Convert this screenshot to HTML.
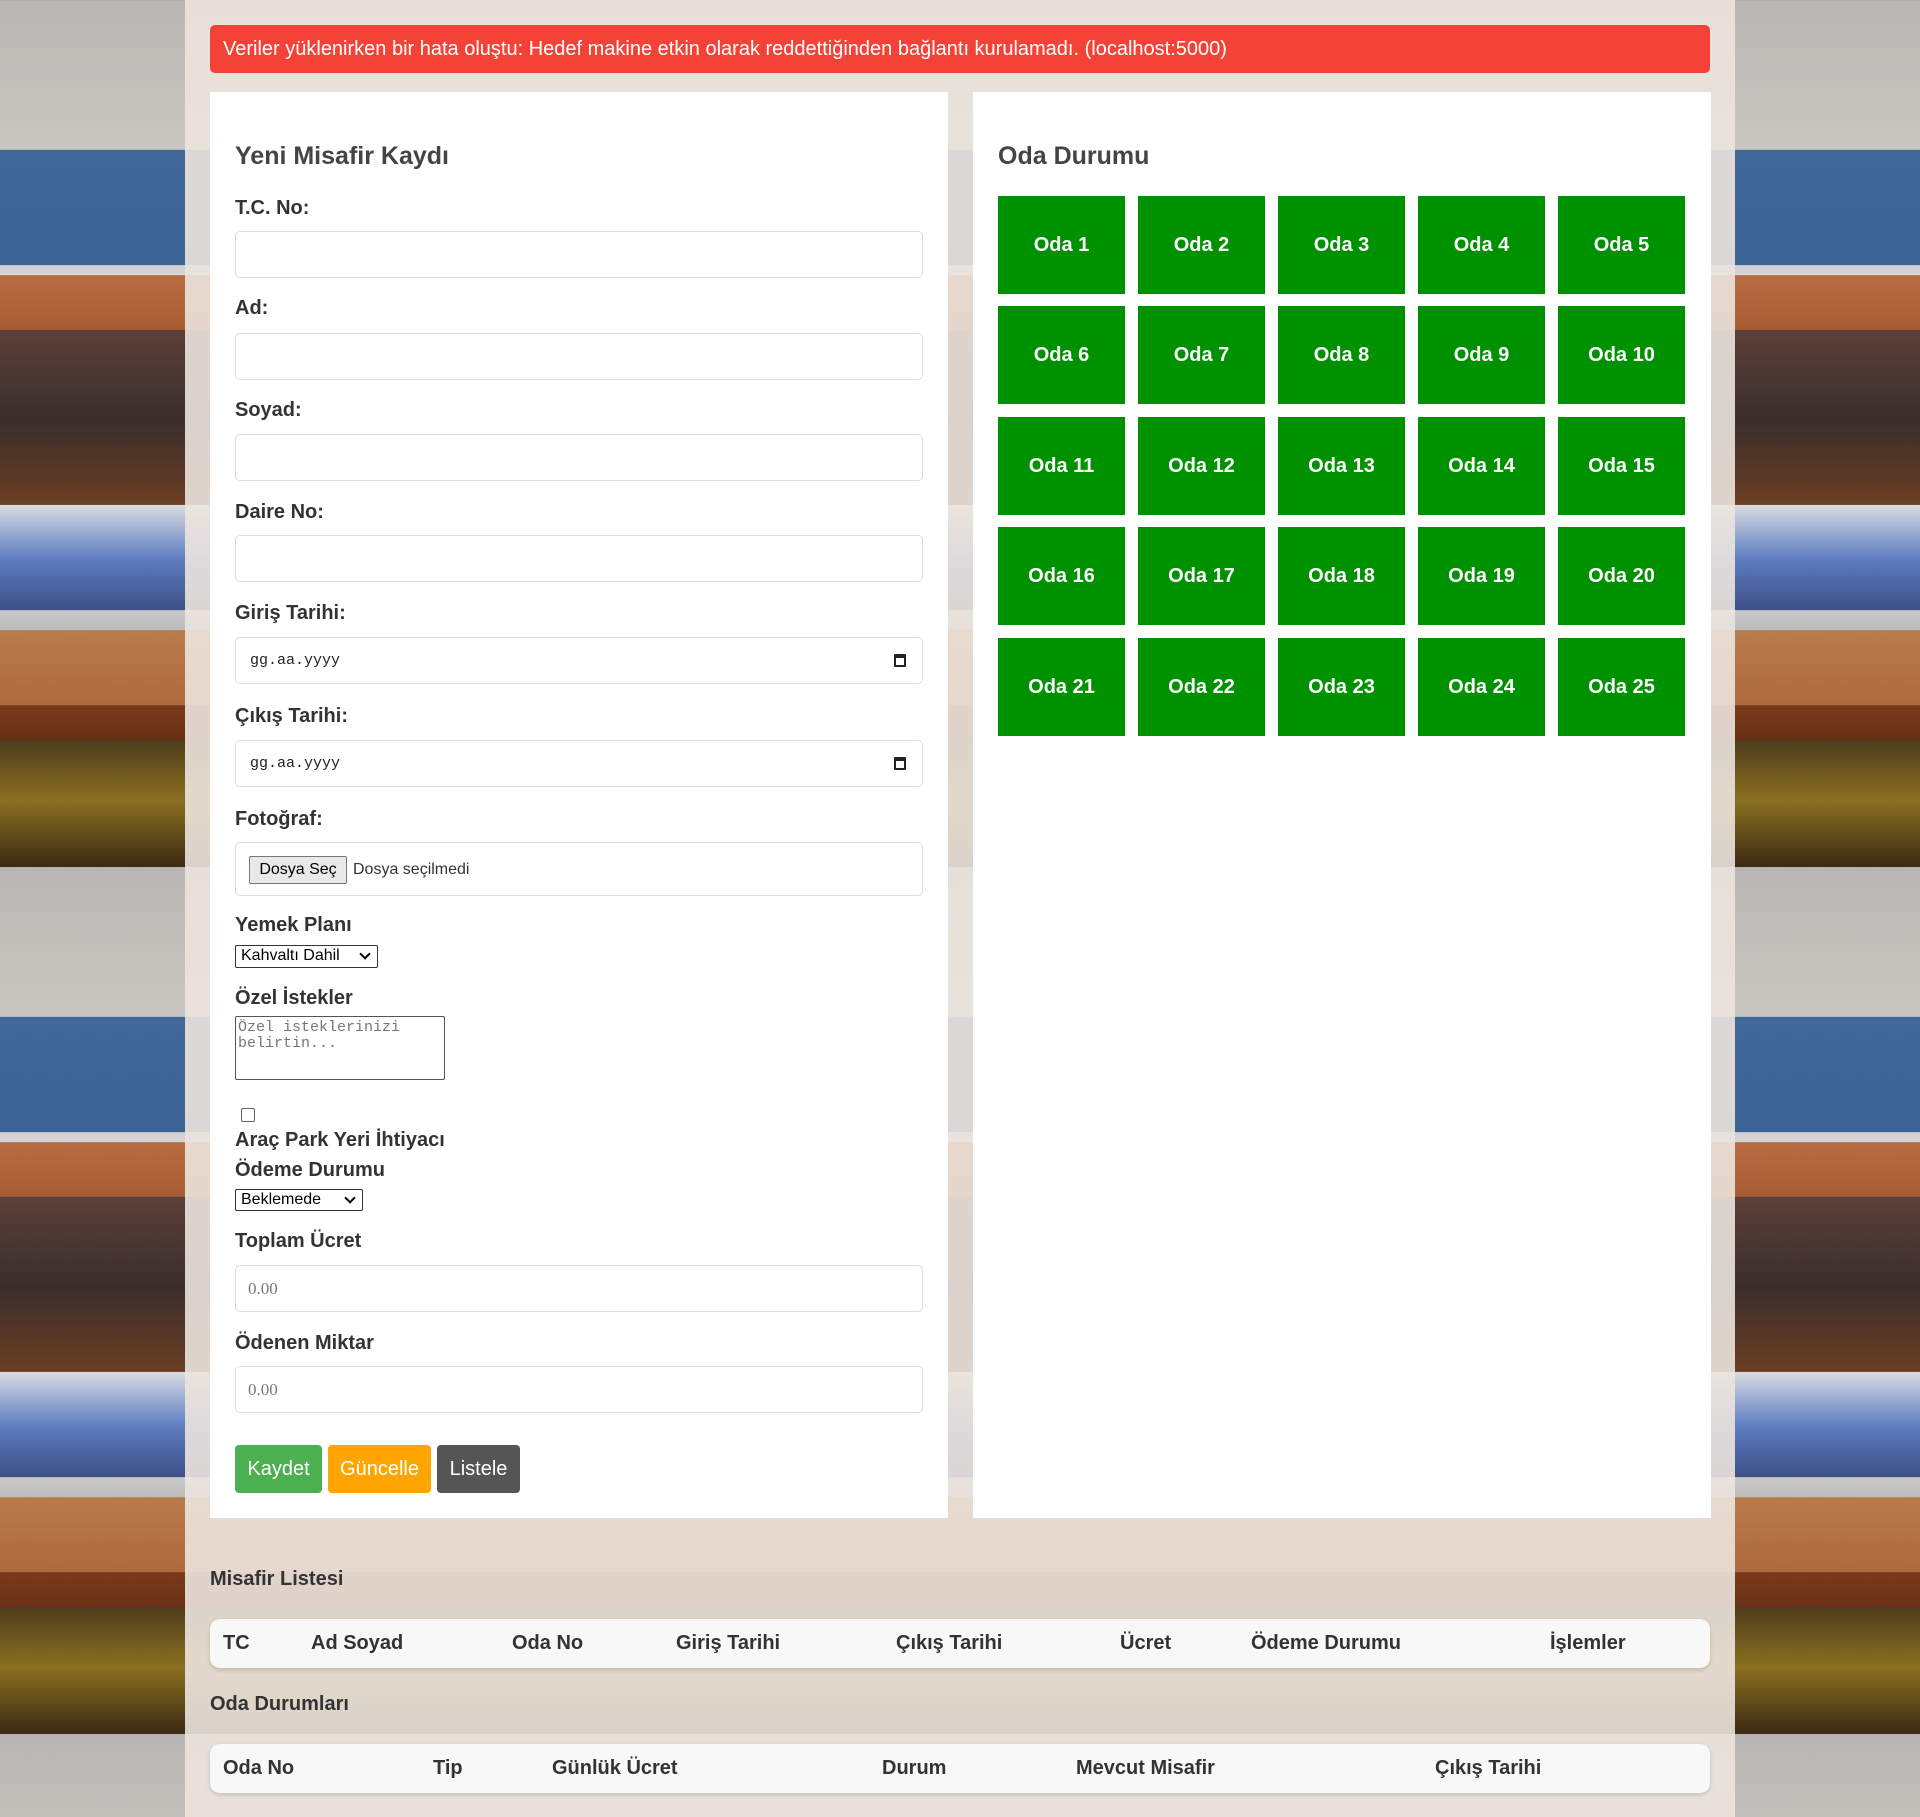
<!DOCTYPE html>
<html><head><meta charset="utf-8"><style>
*{box-sizing:border-box;margin:0;padding:0}
html,body{width:1920px;height:1817px;overflow:hidden}
body{position:relative;font-family:"Liberation Sans",Arial,sans-serif;color:#333;
background:linear-gradient(180deg,#b9b6b3 0,#c9c6c2 150px,#40699a 150px,#3b6494 265px,#cfcfcf 265px,#d6d6d6 275px,#b76c42 275px,#a85c34 330px,#5a4038 330px,#3a2e2c 420px,#6b3e22 505px,#d8dbe2 505px,#5c7cc0 560px,#3d4f86 610px,#c9c9c9 610px,#bcbcbc 630px,#b97b4c 630px,#ae6a3c 705px,#7a3a1a 705px,#6a3014 740px,#4e3c1c 740px,#8a7020 800px,#3a2a14 867px);
background-size:1920px 867px;background-repeat:repeat-y}
.wrap{position:absolute;left:185px;top:0;width:1550px;height:1817px;background:rgba(236,228,222,0.9)}
.a{position:absolute}
.alert{left:210px;top:25px;width:1500px;height:48px;background:#f44336;border-radius:5px;color:#fff;font-size:20px;line-height:48px;padding-left:13px}
.panel{background:#fff;top:92px;height:1426px;width:738px}
h2{position:absolute;font-size:25px;font-weight:bold;color:#444}
.lb{position:absolute;left:235px;font-size:20px;font-weight:bold;line-height:24px;color:#333}
.in{position:absolute;left:235px;width:688px;height:47px;border:1px solid #ddd;border-radius:5px;background:#fff}
.dt{font-family:"Liberation Mono",monospace;font-size:15px;color:#222;line-height:45px;padding-left:14px}
.cal{position:absolute;right:16px;top:16px;width:12px;height:13px;border:2px solid #222;border-top-width:4px;border-radius:1px}
.ph{font-family:"Liberation Serif",serif;font-size:17px;color:#777;line-height:45px;padding-left:12px}
.sel{position:absolute;left:235px;border:1px solid #333;background:#fff;font-size:16px;line-height:20px;padding-left:5px;color:#000;border-radius:2px}
.sel:after{content:"";position:absolute;right:8px;top:4px;width:6px;height:6px;border-right:2px solid #000;border-bottom:2px solid #000;transform:rotate(45deg)}
.btn{position:absolute;top:1445px;height:48px;color:#fff;font-size:20px;line-height:48px;text-align:center;border-radius:4px}
.room{position:absolute;width:127px;height:98px;background:#009100;color:#fff;font-weight:bold;font-size:20px;line-height:98px;text-align:center}
.sec{position:absolute;left:210px;font-size:20px;font-weight:bold}
.tbl{position:absolute;left:210px;width:1500px;height:49px;background:#f8f8f8;border-radius:10px;box-shadow:0 2px 4px rgba(0,0,0,0.15)}
.tbl span{position:absolute;top:0;line-height:49px;font-size:20px;font-weight:bold;color:#333}
</style></head><body>
<div class="wrap"></div>
<div class="a alert">Veriler yüklenirken bir hata oluştu: Hedef makine etkin olarak reddettiğinden bağlantı kurulamadı. (localhost:5000)</div>
<div class="a panel" style="left:210px"></div>
<div class="a panel" style="left:973px"></div>
<h2 style="left:235px;top:142px">Yeni Misafir Kaydı</h2>
<h2 style="left:998px;top:142px">Oda Durumu</h2>

<div class="lb" style="top:196px">T.C. No:</div><div class="in" style="top:231px"></div>
<div class="lb" style="top:296px">Ad:</div><div class="in" style="top:333px"></div>
<div class="lb" style="top:398px">Soyad:</div><div class="in" style="top:434px"></div>
<div class="lb" style="top:500px">Daire No:</div><div class="in" style="top:535px"></div>
<div class="lb" style="top:601px">Giriş Tarihi:</div><div class="in dt" style="top:637px">gg.aa.yyyy<div class="cal"></div></div>
<div class="lb" style="top:704px">Çıkış Tarihi:</div><div class="in dt" style="top:740px">gg.aa.yyyy<div class="cal"></div></div>
<div class="lb" style="top:807px">Fotoğraf:</div>
<div class="in" style="top:842px;height:54px"><div class="a" style="left:13px;top:13px;width:98px;height:28px;border:1px solid #777;background:#e9e9e9;font-size:16px;line-height:26px;text-align:center;color:#000;border-radius:2px">Dosya Seç</div><div class="a" style="left:117px;top:13px;font-size:16px;line-height:28px;color:#333">Dosya seçilmedi</div></div>
<div class="lb" style="top:913px">Yemek Planı</div>
<div class="sel" style="top:945px;width:143px;height:23px">Kahvaltı Dahil</div>
<div class="lb" style="top:986px">Özel İstekler</div>
<div class="a" style="left:235px;top:1016px;width:210px;height:64px;border:1px solid #555;border-radius:2px;background:#fff;font-family:'Liberation Mono',monospace;font-size:15px;color:#777;line-height:16px;padding:3px 2px">Özel isteklerinizi belirtin...</div>
<div class="a" style="left:241px;top:1108px;width:14px;height:14px;border:1px solid #666;border-radius:2px;background:#fff"></div>
<div class="lb" style="top:1128px">Araç Park Yeri İhtiyacı</div>
<div class="lb" style="top:1158px">Ödeme Durumu</div>
<div class="sel" style="top:1189px;width:128px;height:22px">Beklemede</div>
<div class="lb" style="top:1229px">Toplam Ücret</div><div class="in ph" style="top:1265px">0.00</div>
<div class="lb" style="top:1331px">Ödenen Miktar</div><div class="in ph" style="top:1366px">0.00</div>
<div class="btn" style="left:235px;width:87px;background:#4caf50">Kaydet</div>
<div class="btn" style="left:328px;width:103px;background:#ffa500">Güncelle</div>
<div class="btn" style="left:437px;width:83px;background:#555">Listele</div>

<div class="room" style="left:998px;top:196px">Oda 1</div><div class="room" style="left:1138px;top:196px">Oda 2</div><div class="room" style="left:1278px;top:196px">Oda 3</div><div class="room" style="left:1418px;top:196px">Oda 4</div><div class="room" style="left:1558px;top:196px">Oda 5</div>
<div class="room" style="left:998px;top:306px">Oda 6</div><div class="room" style="left:1138px;top:306px">Oda 7</div><div class="room" style="left:1278px;top:306px">Oda 8</div><div class="room" style="left:1418px;top:306px">Oda 9</div><div class="room" style="left:1558px;top:306px">Oda 10</div>
<div class="room" style="left:998px;top:417px">Oda 11</div><div class="room" style="left:1138px;top:417px">Oda 12</div><div class="room" style="left:1278px;top:417px">Oda 13</div><div class="room" style="left:1418px;top:417px">Oda 14</div><div class="room" style="left:1558px;top:417px">Oda 15</div>
<div class="room" style="left:998px;top:527px">Oda 16</div><div class="room" style="left:1138px;top:527px">Oda 17</div><div class="room" style="left:1278px;top:527px">Oda 18</div><div class="room" style="left:1418px;top:527px">Oda 19</div><div class="room" style="left:1558px;top:527px">Oda 20</div>
<div class="room" style="left:998px;top:638px">Oda 21</div><div class="room" style="left:1138px;top:638px">Oda 22</div><div class="room" style="left:1278px;top:638px">Oda 23</div><div class="room" style="left:1418px;top:638px">Oda 24</div><div class="room" style="left:1558px;top:638px">Oda 25</div>

<div class="sec" style="top:1568px">Misafir Listesi</div>
<div class="tbl" style="top:1619px"><span style="left:13px">TC</span><span style="left:101px">Ad Soyad</span><span style="left:302px">Oda No</span><span style="left:466px">Giriş Tarihi</span><span style="left:686px">Çıkış Tarihi</span><span style="left:910px">Ücret</span><span style="left:1041px">Ödeme Durumu</span><span style="left:1340px">İşlemler</span></div>
<div class="sec" style="top:1693px">Oda Durumları</div>
<div class="tbl" style="top:1744px"><span style="left:13px">Oda No</span><span style="left:223px">Tip</span><span style="left:342px">Günlük Ücret</span><span style="left:672px">Durum</span><span style="left:866px">Mevcut Misafir</span><span style="left:1225px">Çıkış Tarihi</span></div>
</body></html>
